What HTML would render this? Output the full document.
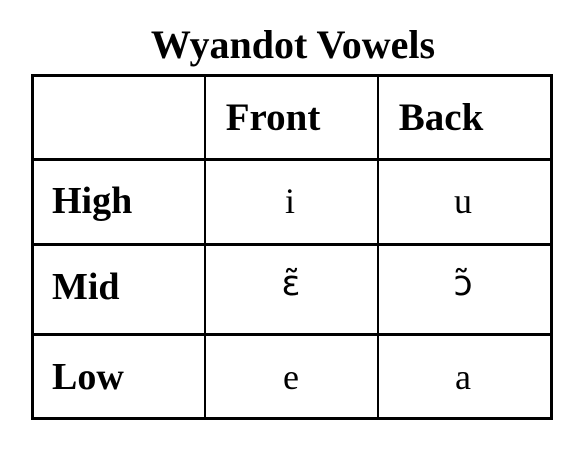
<html><head><style>
body{margin:0;width:588px;height:456px;background:#fff;position:relative;font-family:"Liberation Serif",serif;overflow:hidden}
.l{position:absolute;background:#000}
.t{position:absolute;line-height:1;white-space:nowrap}
.b{font-weight:bold}
.c{transform:translateX(-50%)}
</style></head><body>
<div class="t b c" style="left:293px;top:25px;font-size:40px">Wyandot Vowels</div>
<div class="l" style="left:31px;top:74px;width:522px;height:3px"></div>
<div class="l" style="left:31px;top:417px;width:522px;height:3px"></div>
<div class="l" style="left:31px;top:74px;width:3px;height:346px"></div>
<div class="l" style="left:550px;top:74px;width:3px;height:346px"></div>
<div class="l" style="left:204px;top:74px;width:2px;height:346px"></div>
<div class="l" style="left:377px;top:74px;width:2px;height:346px"></div>
<div class="l" style="left:31px;top:158px;width:522px;height:3px"></div>
<div class="l" style="left:31px;top:243px;width:522px;height:3px"></div>
<div class="l" style="left:31px;top:333px;width:522px;height:3px"></div>
<div class="t b c" style="left:273px;top:98px;font-size:39px">Front</div>
<div class="t b c" style="left:441px;top:98px;font-size:39px">Back</div>
<div class="t b" style="left:52px;top:182px;font-size:38px">High</div>
<div class="t b" style="left:52px;top:268px;font-size:38px">Mid</div>
<div class="t b" style="left:52px;top:358px;font-size:38px">Low</div>
<div class="t c" style="left:290px;top:183px;font-size:36px">i</div>
<div class="t c" style="left:463px;top:183px;font-size:36px">u</div>
<div class="t c" style="left:291px;top:267px;font-size:35px;font-family:'DejaVu Sans',sans-serif">ɛ̃</div>
<div class="t c" style="left:463px;top:267px;font-size:35px;font-family:'DejaVu Sans',sans-serif">ɔ̃</div>
<div class="t c" style="left:291px;top:359px;font-size:36px">e</div>
<div class="t c" style="left:463px;top:359px;font-size:36px">a</div>
</body></html>
